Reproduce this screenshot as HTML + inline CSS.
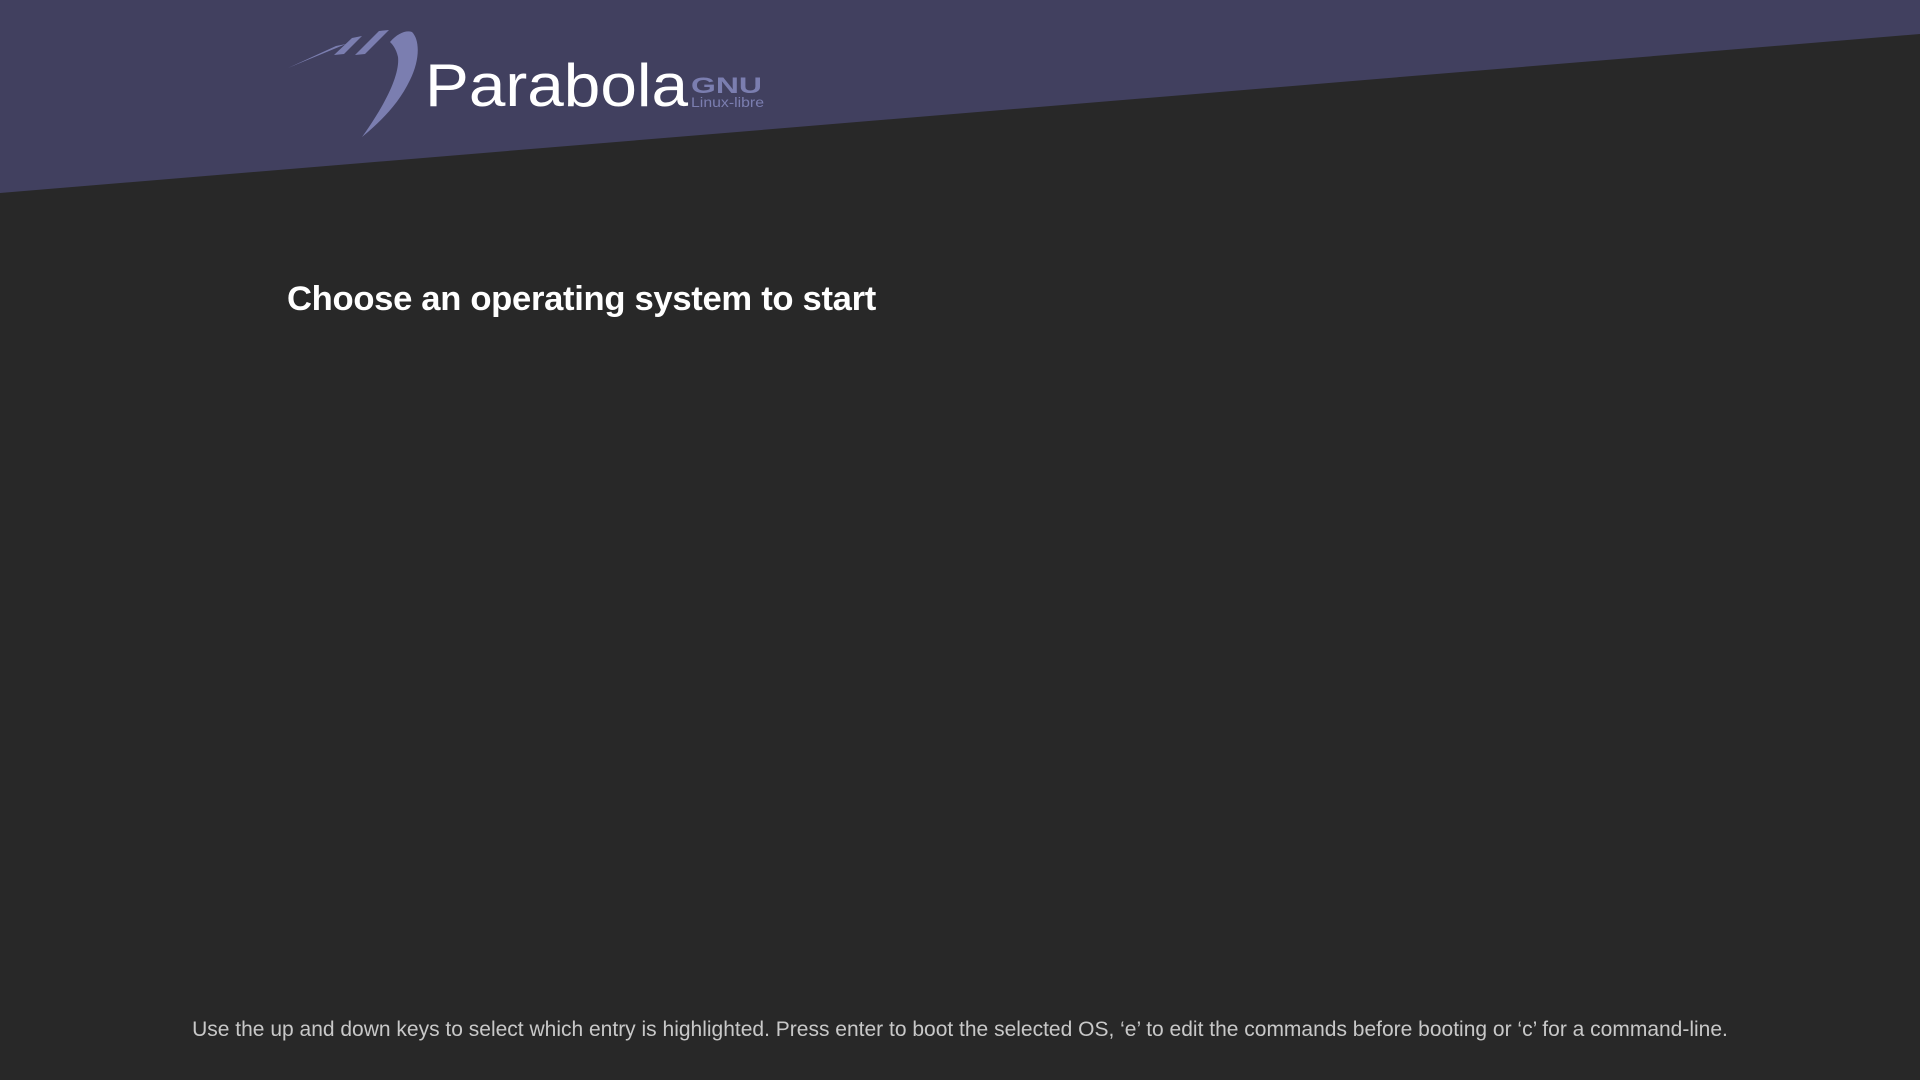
<!DOCTYPE html>
<html><head><meta charset="utf-8"><style>
html,body{margin:0;padding:0;width:1920px;height:1080px;overflow:hidden;background:#282828;font-family:"Liberation Sans",sans-serif}
svg{position:absolute;left:0;top:0}
h1{position:absolute;left:287px;top:280px;margin:0;font-size:34.6px;font-weight:bold;color:#fff;letter-spacing:-0.3px}
.foot{position:absolute;left:0;width:1920px;top:1018px;text-align:center;font-size:21px;color:#c8c8c8;white-space:nowrap}
</style></head><body>
<svg width="1920" height="1080">
<polygon points="0,0 1920,0 1920,34 0,193" fill="#41405f"/>
<g fill="#7b7eb0">
<polygon points="288,68 336,46 346,44 300,63"/>
<polygon points="334,55 352,38 362,36 344,54"/>
<polygon points="355,55 379,31 389,30 365,54"/>
<path d="M362,137 C385,105 400,75 398,57 C396,48 392,44 390,42 C398,33 406,30 412,32 C420,40 420,60 410,80 C398,105 380,122 362,137 Z"/>
</g>
<text x="425" y="106" font-family="Liberation Sans" font-size="60" fill="#ffffff" textLength="263" lengthAdjust="spacingAndGlyphs">Parabola</text>
<text x="691" y="93" font-family="Liberation Sans" font-weight="bold" font-size="22" fill="#7b7eb0" textLength="71" lengthAdjust="spacingAndGlyphs">GNU</text>
<text x="691" y="107" font-family="Liberation Sans" font-size="14" fill="#7b7eb0" textLength="73" lengthAdjust="spacingAndGlyphs">Linux-libre</text>
</svg>
<h1>Choose an operating system to start</h1>
<div class="foot">Use the up and down keys to select which entry is highlighted. Press enter to boot the selected OS, ‘e’ to edit the commands before booting or ‘c’ for a command-line.</div>
</body></html>
